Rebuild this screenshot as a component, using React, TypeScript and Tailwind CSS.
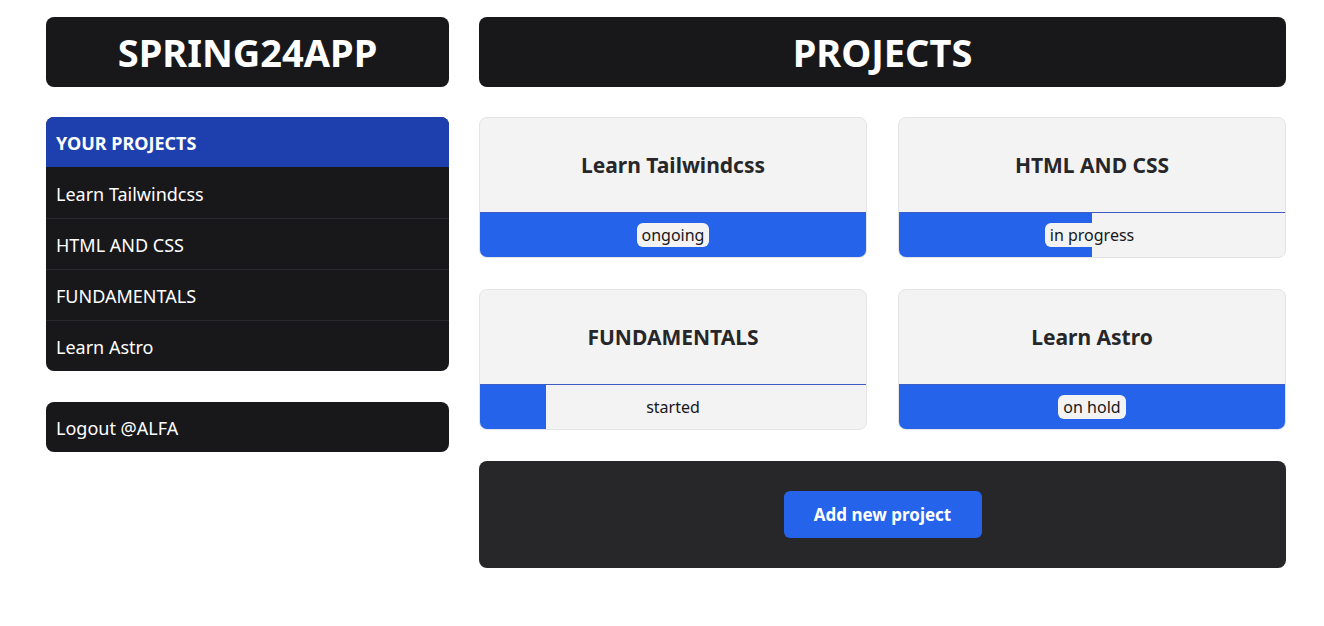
const projects = [
  { id: 1, title: "Learn Tailwindcss", status: "ongoing", progress: 100 },
  { id: 2, title: "HTML AND CSS", status: "in progress", progress: 50 },
  { id: 3, title: "FUNDAMENTALS", status: "started", progress: 17 },
  { id: 4, title: "Learn Astro", status: "on hold", progress: 100 },
];

function ProjectCard({ title, status, progress }: { title: string; status: string; progress: number }) {
  return (
    <div className="flex flex-col h-[141px] rounded-lg border border-[#e4e4e7] bg-[#f3f3f3] overflow-hidden">
      <div className="flex-1 flex items-center justify-center pt-[2px] text-[21px] font-bold text-[#27272a]">{title}</div>
      <div className="relative h-[45px] border-t border-[#3f5bc4] flex items-center justify-center">
        <div className="absolute left-0 top-0 bottom-0 bg-[#2563eb]" style={{ width: `${progress}%` }} />
        <span className="relative rounded-md bg-[#f3f3f3] px-[5px] text-[16px] leading-[24px] text-[#18181b]">{status}</span>
      </div>
    </div>
  );
}

export default function App() {
  return (
    <div className="min-h-[626px] bg-white font-['Noto_Sans',sans-serif] flex gap-[30px] pl-[46px] pt-[17px]">
      <aside className="w-[403px] flex flex-col">
        <div className="h-[70px] rounded-lg bg-[#18181b] flex items-center justify-center text-white text-[38px] font-bold">
          SPRING24APP
        </div>
        <div className="mt-[30px] rounded-lg bg-[#18181b] overflow-hidden">
          <div className="h-[50px] bg-[#1e40af] flex items-center pt-[2px] px-[10px] text-white text-[18px] font-bold">YOUR PROJECTS</div>
          {projects.map(({ id, title }, i) => (
            <div
              key={id}
              className={`h-[51px] flex items-center pt-[3px] px-[10px] text-white text-[18px] ${i > 0 ? "border-t border-[#2a2a2e]" : ""}`}
            >
              {title}
            </div>
          ))}
        </div>
        <div className="mt-[31px] h-[50px] rounded-lg bg-[#18181b] flex items-center pt-[2px] px-[10px] text-white text-[18px]">
          Logout @ALFA
        </div>
      </aside>
      <main className="w-[807px] flex flex-col">
        <div className="h-[70px] rounded-lg bg-[#18181b] flex items-center justify-center text-white text-[38px] font-bold">
          PROJECTS
        </div>
        <div className="mt-[30px] grid grid-cols-2 gap-[31px]">
          {projects.map((p) => (
            <ProjectCard key={p.id} {...p} />
          ))}
        </div>
        <div className="mt-[31px] h-[107px] rounded-lg bg-[#27272a] flex items-center justify-center">
          <button className="h-[47px] w-[198px] rounded-md bg-[#2563eb] text-white text-[17px] font-bold">Add new project</button>
        </div>
      </main>
    </div>
  );
}
